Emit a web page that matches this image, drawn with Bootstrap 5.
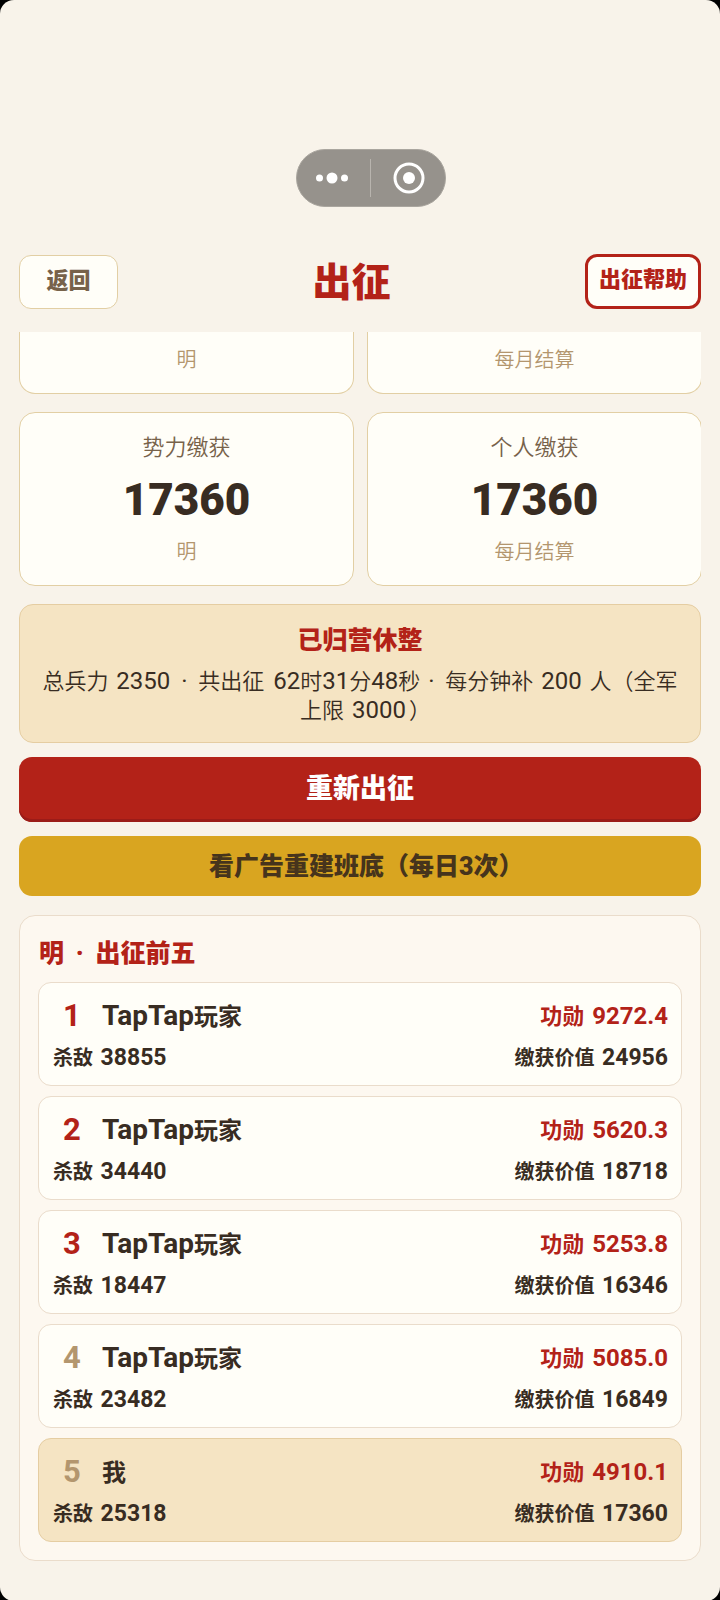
<!DOCTYPE html>
<html lang="zh-CN">
<head>
<meta charset="utf-8">
<meta name="viewport" content="width=device-width, initial-scale=1">
<title>出征</title>
<link rel="stylesheet" href="https://cdn.jsdelivr.net/npm/bootstrap@5.3.0/dist/css/bootstrap.min.css">
<style>
  :root { --red: #b32218; --ink: #382c22; --brown: #77624a; --tan: #b3966e; --line: #e2cfa4; --soft: #eadccb; --sand: #f5e4c3; --paper: #fffef8; }
  html { background: #000; }
  body { background: transparent; color: var(--ink); font-family: "Noto Sans CJK SC", sans-serif; }
  .screen { background: #f8f3ea; border-radius: 14px; padding: 149px 19px 40px; }
  .num { font-family: Roboto, "Noto Sans CJK SC", sans-serif; line-height: 1; }
  .capsule-row { padding-left: 21px; margin-bottom: 47px; }
  .capsule { width: 150px; height: 58px; border-radius: 29px; background: #96928c; border: 1px solid #aaa69f; }
  .capsule button { line-height: 0; }
  .capsule .bar { width: 1px; height: 38px; background: #b8b4ae; }
  .topbar { margin-bottom: 23px; }
  .topbar h1 { font-size: 39px; line-height: 51px; font-weight: 900; color: var(--red); padding-bottom: 4px; }
  .btn-top { font-size: 22px; line-height: 30px; font-weight: 900; background: var(--paper); border-radius: 12px; }
  .btn-back { width: 99px; height: 54px; color: var(--brown); border: 1px solid var(--line); padding: 7px 0 15px; }
  .btn-help { width: 116px; height: 55px; color: var(--red); border: 3px solid var(--red); padding: 5px 0 14px; }
  .btn-top:hover { background: var(--sand); color: var(--red); }
  .stats { display: grid; grid-template-columns: 1fr 1fr; gap: 18px 13px; margin-right: -1px; margin-bottom: 18px; }
  .stat { background: var(--paper); border: 1px solid var(--line); border-radius: 16px; text-align: center; padding: 16px 12px 19px; }
  .stat.cut { border-top: 0; border-radius: 0 0 16px 16px; padding: 12px 12px 19px; }
  .stat .name { font-size: 22px; line-height: 32px; font-weight: 350; color: var(--brown); }
  .stat .value { font-size: 44px; line-height: 56px; font-weight: 900; margin: 11px 0 8px; }
  .stat .note { font-size: 20px; line-height: 30px; font-weight: 350; color: var(--tan); }
  .notice { background: var(--sand); border: 1px solid #e5cda2; border-radius: 14px; padding: 15px 20px 19px; margin-bottom: 14px; }
  .notice h2 { font-size: 25px; line-height: 36px; font-weight: 900; color: var(--red); margin: 0 0 9px; }
  .notice p { font-size: 22px; line-height: 29px; font-weight: 350; }
  .notice .num { font-size: 24px; font-weight: 400; }
  .notice .gap { margin: 0 3px; }
  .notice .dot { margin: 0 6px 0 3px; }
  .btn-main { font-size: 27px; line-height: 38px; font-weight: 900; color: #fff; background: var(--red); border: 0; border-radius: 13px; padding: 11px 0 16px; box-shadow: inset 0 -3px 0 #9b1c18; margin-bottom: 14px; }
  .btn-main:hover { background: #a61e15; color: #fff; }
  .btn-ad { font-size: 25px; line-height: 36px; font-weight: 900; color: #46341c; background: #d9a520; border: 0; border-radius: 13px; padding: 10px 0 14px; margin-bottom: 19px; }
  .btn-ad:hover { background: #c9971a; color: #46341c; }
  .half { font-feature-settings: "halt"; }
  .board { background: #fdf8f0; border: 1px solid var(--soft); border-radius: 16px; padding: 17px 18px 18px; }
  .board h2 { font-size: 25px; line-height: 36px; font-weight: 900; color: var(--red); margin: 0 0 13px 1px; }
  .board .dot { margin: 0 6px; }
  .entries { gap: 10px; }
  .entry { background: var(--paper); border: 1px solid var(--soft); border-radius: 13px; padding: 14px 13px 14px 14px; font-weight: 700; }
  .entry.me { background: var(--sand); border-color: #e5cda2; }
  .entry .top { line-height: 36px; height: 36px; margin-bottom: 10px; }
  .entry .sub { font-size: 20px; line-height: 28px; height: 28px; }
  .entry .sub .num { font-size: 23px; margin-left: 3px; }
  .rank { width: 38px; margin-right: 11px; text-align: center; font-size: 31px; color: var(--tan); }
  .rank.hot, .merit { color: var(--red); }
  .player { font-size: 24px; padding-bottom: 1px; }
  .player .num { font-size: 28px; }
  .merit { font-size: 22px; padding-bottom: 2px; }
  .merit .num { font-size: 24px; margin-left: 3px; }
</style>
</head>
<body>
<div class="screen min-vh-100">
  <div class="capsule-row d-flex justify-content-center">
    <div class="capsule d-flex align-items-center">
      <button type="button" class="btn p-0 border-0 flex-fill" aria-label="更多">
        <svg width="34" height="34" viewBox="0 0 34 34" fill="#fff"><circle cx="3.500" cy="17" r="3.500"/><circle cx="16" cy="17" r="5.500"/><circle cx="28.500" cy="17" r="3.500"/></svg>
      </button>
      <span class="bar"></span>
      <button type="button" class="btn p-0 border-0 flex-fill" aria-label="关闭">
        <svg width="34" height="34" viewBox="0 0 34 34"><circle cx="18" cy="17" r="14" fill="none" stroke="#fff" stroke-width="3"/><circle cx="18" cy="17" r="6" fill="#fff"/></svg>
      </button>
    </div>
  </div>

  <header class="topbar d-flex align-items-center justify-content-between">
    <button type="button" class="btn btn-top btn-back">返回</button>
    <h1 class="mb-0">出征</h1>
    <button type="button" class="btn btn-top btn-help">出征帮助</button>
  </header>

  <main class="overflow-hidden">
    <section class="stats">
      <div class="stat cut"><div class="note">明</div></div>
      <div class="stat cut"><div class="note">每月结算</div></div>
      <div class="stat"><div class="name">势力缴获</div><div class="value num">17360</div><div class="note">明</div></div>
      <div class="stat"><div class="name">个人缴获</div><div class="value num">17360</div><div class="note">每月结算</div></div>
    </section>

    <section class="notice text-center">
      <h2>已归营休整</h2>
      <p class="mb-0">总兵力 <span class="num gap">2350</span> <span class="num dot">·</span> 共出征 <span class="num ms-1">62</span>时<span class="num">31</span>分<span class="num">48</span>秒 <span class="num dot">·</span> 每分钟补 <span class="num gap">200</span> 人（全军上限 <span class="num gap">3000</span><span class="half">）</span></p>
    </section>

    <button type="button" class="btn btn-main d-block w-100">重新出征</button>
    <button type="button" class="btn btn-ad d-block w-100">看广告重建班底（每日<span class="num">3</span>次<span class="half">）</span></button>

    <section class="board">
      <h2>明 <span class="num dot">·</span> 出征前五</h2>
      <div class="entries d-grid">
        <div class="entry">
          <div class="top d-flex align-items-center"><span class="rank hot num">1</span><span class="player"><span class="num">TapTap</span>玩家</span><span class="merit ms-auto">功勋 <span class="num">9272.4</span></span></div>
          <div class="sub d-flex justify-content-between"><span>杀敌 <span class="num">38855</span></span><span>缴获价值 <span class="num">24956</span></span></div>
        </div>
        <div class="entry">
          <div class="top d-flex align-items-center"><span class="rank hot num">2</span><span class="player"><span class="num">TapTap</span>玩家</span><span class="merit ms-auto">功勋 <span class="num">5620.3</span></span></div>
          <div class="sub d-flex justify-content-between"><span>杀敌 <span class="num">34440</span></span><span>缴获价值 <span class="num">18718</span></span></div>
        </div>
        <div class="entry">
          <div class="top d-flex align-items-center"><span class="rank hot num">3</span><span class="player"><span class="num">TapTap</span>玩家</span><span class="merit ms-auto">功勋 <span class="num">5253.8</span></span></div>
          <div class="sub d-flex justify-content-between"><span>杀敌 <span class="num">18447</span></span><span>缴获价值 <span class="num">16346</span></span></div>
        </div>
        <div class="entry">
          <div class="top d-flex align-items-center"><span class="rank num">4</span><span class="player"><span class="num">TapTap</span>玩家</span><span class="merit ms-auto">功勋 <span class="num">5085.0</span></span></div>
          <div class="sub d-flex justify-content-between"><span>杀敌 <span class="num">23482</span></span><span>缴获价值 <span class="num">16849</span></span></div>
        </div>
        <div class="entry me">
          <div class="top d-flex align-items-center"><span class="rank num">5</span><span class="player">我</span><span class="merit ms-auto">功勋 <span class="num">4910.1</span></span></div>
          <div class="sub d-flex justify-content-between"><span>杀敌 <span class="num">25318</span></span><span>缴获价值 <span class="num">17360</span></span></div>
        </div>
      </div>
    </section>
  </main>
</div>
<script src="https://cdn.jsdelivr.net/npm/bootstrap@5.3.0/dist/js/bootstrap.bundle.min.js"></script>
</body>
</html>
